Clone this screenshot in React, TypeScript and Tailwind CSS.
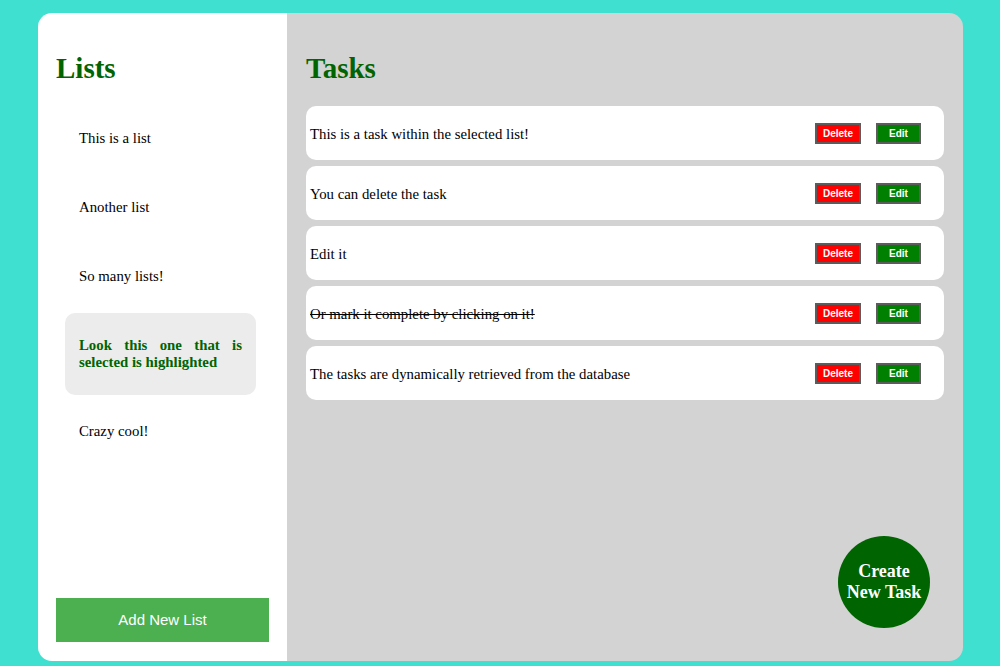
const lists = [
  { id: 1, name: 'This is a list' },
  { id: 2, name: 'Another list' },
  { id: 3, name: 'So many lists!' },
  { id: 4, name: 'Look this one that is selected is highlighted', selected: true },
  { id: 5, name: 'Crazy cool!' },
];

const tasks = [
  { id: 1, title: 'This is a task within the selected list!' },
  { id: 2, title: 'You can delete the task' },
  { id: 3, title: 'Edit it' },
  { id: 4, title: 'Or mark it complete by clicking on it!', completed: true },
  { id: 5, title: 'The tasks are dynamically retrieved from the database' },
];

const serif = "font-['Liberation_Serif','Times_New_Roman',serif]";
const sans = "font-['Liberation_Sans',Arial,sans-serif]";

export default function App() {
  return (
    <div className={`h-[666px] w-full bg-[#40E0D0] pl-[38px] pr-[37px] pt-[13px] pb-[5px] ${serif}`}>
      <div className="relative flex h-full overflow-hidden rounded-[14px]">
        {/* Lists sidebar */}
        <div className="flex w-[249px] shrink-0 flex-col bg-white px-[18px] pt-[39px] pb-[19px]">
          <h1 className="text-[29px] font-bold leading-[33px] text-[#006400]">Lists</h1>
          <ul className="mt-[21px] flex flex-col gap-[4px] pl-[9px] pr-[13px]">
            {lists.map((list) => (
              <li
                key={list.id}
                className={`rounded-[10px] px-[14px] py-6 text-[14.8px] leading-[17px] ${
                  list.selected
                    ? 'bg-[#ececec] text-justify font-bold text-[#006400]'
                    : 'text-black'
                }`}
              >
                {list.name}
              </li>
            ))}
          </ul>
          <button
            className={`mt-auto h-[44px] w-full bg-[#4CAF50] text-[15px] text-white ${sans}`}
          >
            Add New List
          </button>
        </div>

        {/* Tasks */}
        <div className="flex-1 bg-[#d3d3d3] px-[19px] pt-[39px]">
          <h1 className="text-[29px] font-bold leading-[33px] text-[#006400]">Tasks</h1>
          <div className="mt-[21px] flex flex-col gap-[6px]">
            {tasks.map((task) => (
              <div
                key={task.id}
                className="flex h-[54px] items-center rounded-[10px] bg-white pl-[4px] pr-[23px]"
              >
                <span
                  className={`flex-1 pt-[2px] text-[14.8px] text-black ${task.completed ? 'line-through' : ''}`}
                >
                  {task.title}
                </span>
                <div className={`flex items-center gap-[15px] ${sans}`}>
                  <button className="h-[21px] w-[46px] border-2 border-[#5c5c5c] bg-[#ff0000] text-[10px] font-bold text-white">
                    Delete
                  </button>
                  <button className="h-[21px] w-[45px] border-2 border-[#5c5c5c] bg-[#008000] text-[10px] font-bold text-white">
                    Edit
                  </button>
                </div>
              </div>
            ))}
          </div>
        </div>

        {/* Floating create button */}
        <button className="absolute right-[33px] bottom-[33px] flex h-[92px] w-[92px] items-center justify-center rounded-full bg-[#006400] text-[18px] font-bold leading-[21px] text-white">
          Create
          <br />
          New Task
        </button>
      </div>
    </div>
  );
}
